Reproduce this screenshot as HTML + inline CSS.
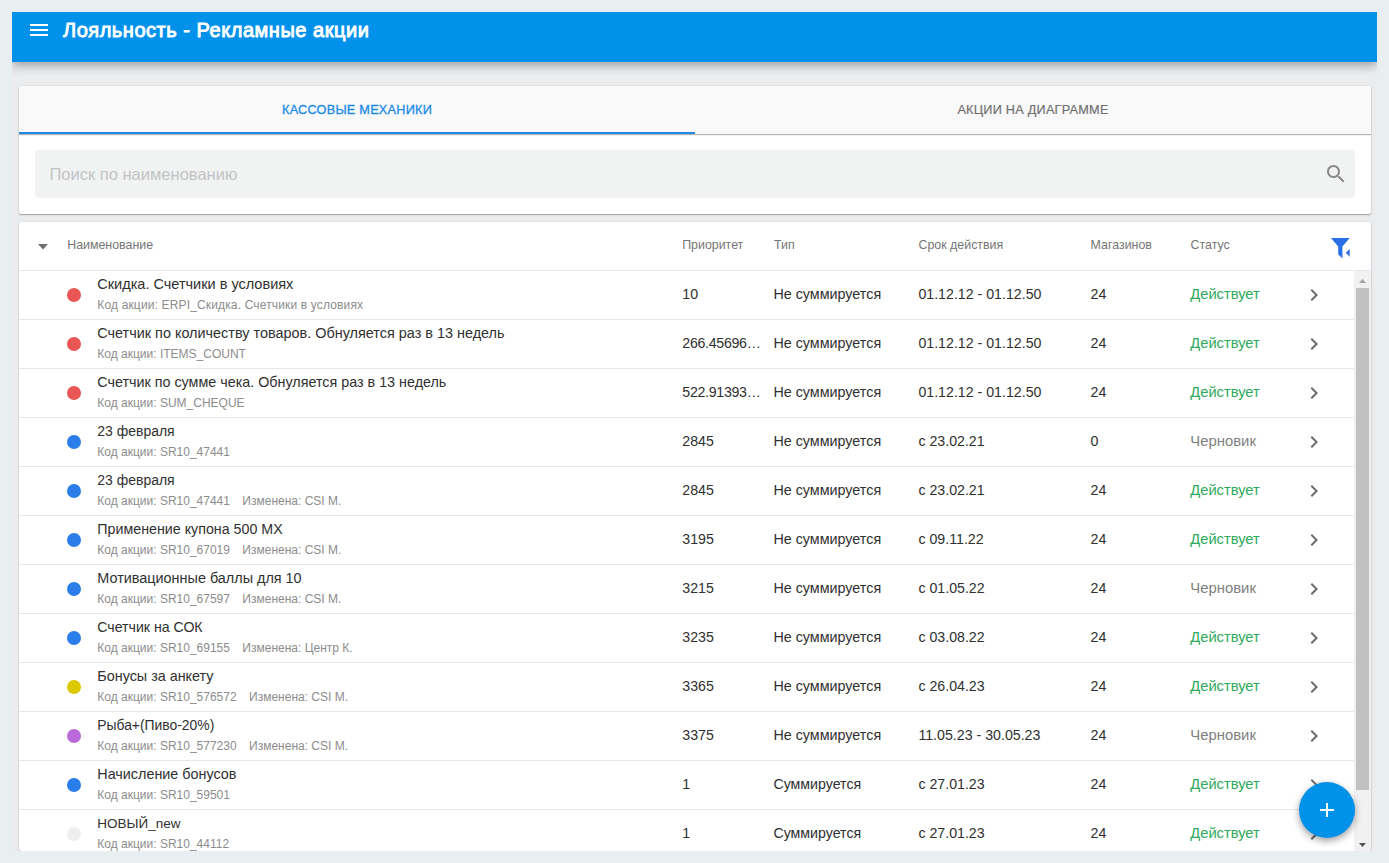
<!DOCTYPE html>
<html><head><meta charset="utf-8">
<style>
*{box-sizing:border-box;margin:0;padding:0}
html,body{width:1389px;height:863px;overflow:hidden}
body{background:#e9eef1;font-family:"Liberation Sans",sans-serif;position:relative}
.t{position:absolute;white-space:nowrap}
#cont{position:absolute;left:12px;top:12px;width:1365px;height:851px;background:#ebecee;overflow:hidden}
#hdr{position:absolute;left:0;top:0;width:1365px;height:50px;background:#0091ea;box-shadow:0 3px 10px rgba(0,0,0,.35)}
.card{position:absolute;background:#fff;border-radius:2px;box-shadow:0 1px 1.5px rgba(0,0,0,.33),0 0 1.5px rgba(0,0,0,.12)}
#top{left:19px;top:86px;width:1352px;height:128px}
#tabs{position:absolute;left:0;top:0;width:1352px;height:48px;background:#f9f9f9;border-radius:2px 2px 0 0;box-shadow:0 1px 0 #b4b4b4,0 2px 1px rgba(0,0,0,.06)}
#ind{position:absolute;left:0;top:46px;width:676px;height:2px;background:#1e88e5}
#search{position:absolute;left:16px;top:64px;width:1320px;height:48px;background:#f1f2f2;border-radius:4px}
#tbl{left:19px;top:222px;width:1352px;height:629px;overflow:hidden}
.sep{position:absolute;left:0;height:1px;background:#e6e6ee}
.dot{position:absolute;width:14px;height:14px;border-radius:50%}
#sb{position:absolute;left:1335px;top:49px;width:17px;height:580px;background:#f1f1f1}
#thumb{position:absolute;left:2px;top:17px;width:13px;height:502px;background:#c1c1c1}
#fab{position:absolute;left:1299px;top:782px;width:56px;height:56px;border-radius:50%;background:#0091ea;box-shadow:0 3px 6px rgba(0,0,0,.25),0 3px 10px rgba(0,0,0,.15)}
</style></head><body>
<div id="cont">
<div id="hdr">
  <svg style="position:absolute;left:18px;top:12px" width="18" height="12"><rect x="0" y="0" width="18" height="2" fill="#fff"/><rect x="0" y="5" width="18" height="2" fill="#fff"/><rect x="0" y="10" width="18" height="2" fill="#fff"/></svg>

<div class="t" style="left:51px;top:8.00px;font-size:20px;line-height:20px;color:#fff;letter-spacing:0.53px;-webkit-text-stroke:0.9px #fff">Лояльность - Рекламные акции</div>
</div></div>
<div class="card" id="top"><div id="tabs">
<div class="t" style="left:0;width:676px;text-align:center;top:18.00px;font-size:12.7px;line-height:12.7px;color:#1a8ae8;letter-spacing:0.24px;-webkit-text-stroke:0.3px #1a8ae8">КАССОВЫЕ МЕХАНИКИ</div>
<div class="t" style="left:676px;width:676px;text-align:center;top:18.00px;font-size:12.7px;line-height:12.7px;color:#707070;letter-spacing:0.24px;-webkit-text-stroke:0.2px #707070">АКЦИИ НА ДИАГРАММЕ</div>
<div id="ind"></div></div>
<div id="search"><div class="t" style="left:14.5px;top:16.00px;font-size:16.5px;line-height:16.5px;color:#c2c4c6">Поиск по наименованию</div>
<svg style="position:absolute;left:1289px;top:12px" width="24" height="24" viewBox="0 0 24 24"><path fill="#8a8a8a" d="M15.5 14h-.79l-.28-.27C15.41 12.59 16 11.11 16 9.5 16 5.91 13.09 3 9.5 3S3 5.91 3 9.5 5.91 16 9.5 16c1.61 0 3.09-.59 4.23-1.57l.27.28v.79l5 4.99L20.49 19l-4.99-5zm-6 0C7.01 14 5 11.99 5 9.5S7.01 5 9.5 5 14 7.01 14 9.5 11.99 14 9.5 14z"/></svg>
</div></div>
<div class="card" id="tbl">
<svg style="position:absolute;left:19px;top:21.5px" width="10" height="6"><path d="M0 0L10 0L5 5.5Z" fill="#6e6e6e"/></svg>
<div class="t" style="left:48.2px;top:17.00px;font-size:12.4px;line-height:12.4px;color:#757575">Наименование</div>
<div class="t" style="left:663.2px;top:17.00px;font-size:12.4px;line-height:12.4px;color:#757575">Приоритет</div>
<div class="t" style="left:755.0px;top:17.00px;font-size:12.4px;line-height:12.4px;color:#757575">Тип</div>
<div class="t" style="left:899.5px;top:17.00px;font-size:12.4px;line-height:12.4px;color:#757575">Срок действия</div>
<div class="t" style="left:1071.6px;top:17.00px;font-size:12.4px;line-height:12.4px;color:#757575">Магазинов</div>
<div class="t" style="left:1171.6px;top:17.00px;font-size:12.4px;line-height:12.4px;color:#757575">Статус</div>
<svg style="position:absolute;left:1312px;top:16px" width="20" height="22" viewBox="0 0 20 22"><path fill="#2a6ee8" d="M0 0H18.7L11.4 8.6V20.5L7.2 16.2V8.6Z"/><path fill="#2a6ee8" d="M18.7 11V18.7L14.8 14.8Z"/></svg>
<div class="sep" style="top:48px;width:1352px"></div>
<div class="dot" style="left:48px;top:66px;background:#e85656"></div>
<div class="t" style="left:78.3px;top:55.00px;font-size:14.51px;line-height:14.51px;color:#303030">Скидка. Счетчики в условиях</div>
<div class="t" style="left:78.3px;top:77.00px;font-size:12.0px;line-height:12.0px;color:#8c8c8c;letter-spacing:0.15px">Код акции: ERPI_Скидка. Счетчики в условиях</div>
<div class="t" style="left:663.3px;top:65.00px;font-size:14.2px;line-height:14.2px;color:#303030">10</div>
<div class="t" style="left:754.4px;top:65.00px;font-size:14.33px;line-height:14.33px;color:#303030">Не суммируется</div>
<div class="t" style="left:899.4px;top:65.00px;font-size:14.2px;line-height:14.2px;color:#303030">01.12.12 - 01.12.50</div>
<div class="t" style="left:1071.6px;top:65.00px;font-size:14.2px;line-height:14.2px;color:#303030">24</div>
<div class="t" style="left:1171.3px;top:65.00px;font-size:14.7px;line-height:14.7px;color:#2eaa5c">Действует</div>
<svg style="position:absolute;left:1283px;top:61px" width="24" height="24" viewBox="0 0 24 24"><path fill="#6b6b6b" d="M10 6L8.59 7.41 13.17 12l-4.58 4.59L10 18l6-6z"/></svg>
<div class="sep" style="top:97px;width:1335px"></div>
<div class="dot" style="left:48px;top:115px;background:#e85656"></div>
<div class="t" style="left:78.3px;top:104.00px;font-size:14.43px;line-height:14.43px;color:#303030">Счетчик по количеству товаров. Обнуляется раз в 13 недель</div>
<div class="t" style="left:78.3px;top:126.00px;font-size:12.0px;line-height:12.0px;color:#8c8c8c">Код акции: ITEMS_COUNT</div>
<div class="t" style="left:663.3px;top:114.00px;font-size:14.2px;line-height:14.2px;color:#303030;letter-spacing:-0.3px">266.45696…</div>
<div class="t" style="left:754.4px;top:114.00px;font-size:14.33px;line-height:14.33px;color:#303030">Не суммируется</div>
<div class="t" style="left:899.4px;top:114.00px;font-size:14.2px;line-height:14.2px;color:#303030">01.12.12 - 01.12.50</div>
<div class="t" style="left:1071.6px;top:114.00px;font-size:14.2px;line-height:14.2px;color:#303030">24</div>
<div class="t" style="left:1171.3px;top:114.00px;font-size:14.7px;line-height:14.7px;color:#2eaa5c">Действует</div>
<svg style="position:absolute;left:1283px;top:110px" width="24" height="24" viewBox="0 0 24 24"><path fill="#6b6b6b" d="M10 6L8.59 7.41 13.17 12l-4.58 4.59L10 18l6-6z"/></svg>
<div class="sep" style="top:146px;width:1335px"></div>
<div class="dot" style="left:48px;top:164px;background:#e85656"></div>
<div class="t" style="left:78.3px;top:153.00px;font-size:14.33px;line-height:14.33px;color:#303030">Счетчик по сумме чека. Обнуляется раз в 13 недель</div>
<div class="t" style="left:78.3px;top:175.00px;font-size:12.0px;line-height:12.0px;color:#8c8c8c">Код акции: SUM_CHEQUE</div>
<div class="t" style="left:663.3px;top:163.00px;font-size:14.2px;line-height:14.2px;color:#303030;letter-spacing:-0.3px">522.91393…</div>
<div class="t" style="left:754.4px;top:163.00px;font-size:14.33px;line-height:14.33px;color:#303030">Не суммируется</div>
<div class="t" style="left:899.4px;top:163.00px;font-size:14.2px;line-height:14.2px;color:#303030">01.12.12 - 01.12.50</div>
<div class="t" style="left:1071.6px;top:163.00px;font-size:14.2px;line-height:14.2px;color:#303030">24</div>
<div class="t" style="left:1171.3px;top:163.00px;font-size:14.7px;line-height:14.7px;color:#2eaa5c">Действует</div>
<svg style="position:absolute;left:1283px;top:159px" width="24" height="24" viewBox="0 0 24 24"><path fill="#6b6b6b" d="M10 6L8.59 7.41 13.17 12l-4.58 4.59L10 18l6-6z"/></svg>
<div class="sep" style="top:195px;width:1335px"></div>
<div class="dot" style="left:48px;top:213px;background:#2b7de9"></div>
<div class="t" style="left:78.3px;top:202.00px;font-size:13.98px;line-height:13.98px;color:#303030">23 февраля</div>
<div class="t" style="left:78.3px;top:224.00px;font-size:12.0px;line-height:12.0px;color:#8c8c8c">Код акции: SR10_47441</div>
<div class="t" style="left:663.3px;top:212.00px;font-size:14.2px;line-height:14.2px;color:#303030">2845</div>
<div class="t" style="left:754.4px;top:212.00px;font-size:14.33px;line-height:14.33px;color:#303030">Не суммируется</div>
<div class="t" style="left:899.4px;top:212.00px;font-size:14.2px;line-height:14.2px;color:#303030">с 23.02.21</div>
<div class="t" style="left:1071.6px;top:212.00px;font-size:14.2px;line-height:14.2px;color:#303030">0</div>
<div class="t" style="left:1171.3px;top:212.00px;font-size:14.86px;line-height:14.86px;color:#808080">Черновик</div>
<svg style="position:absolute;left:1283px;top:208px" width="24" height="24" viewBox="0 0 24 24"><path fill="#6b6b6b" d="M10 6L8.59 7.41 13.17 12l-4.58 4.59L10 18l6-6z"/></svg>
<div class="sep" style="top:244px;width:1335px"></div>
<div class="dot" style="left:48px;top:262px;background:#2b7de9"></div>
<div class="t" style="left:78.3px;top:251.00px;font-size:13.98px;line-height:13.98px;color:#303030">23 февраля</div>
<div class="t" style="left:78.3px;top:273.00px;font-size:12.0px;line-height:12.0px;color:#8c8c8c">Код акции: SR10_47441<span style="margin-left:12.4px">Изменена: CSI M.</span></div>
<div class="t" style="left:663.3px;top:261.00px;font-size:14.2px;line-height:14.2px;color:#303030">2845</div>
<div class="t" style="left:754.4px;top:261.00px;font-size:14.33px;line-height:14.33px;color:#303030">Не суммируется</div>
<div class="t" style="left:899.4px;top:261.00px;font-size:14.2px;line-height:14.2px;color:#303030">с 23.02.21</div>
<div class="t" style="left:1071.6px;top:261.00px;font-size:14.2px;line-height:14.2px;color:#303030">24</div>
<div class="t" style="left:1171.3px;top:261.00px;font-size:14.7px;line-height:14.7px;color:#2eaa5c">Действует</div>
<svg style="position:absolute;left:1283px;top:257px" width="24" height="24" viewBox="0 0 24 24"><path fill="#6b6b6b" d="M10 6L8.59 7.41 13.17 12l-4.58 4.59L10 18l6-6z"/></svg>
<div class="sep" style="top:293px;width:1335px"></div>
<div class="dot" style="left:48px;top:311px;background:#2b7de9"></div>
<div class="t" style="left:78.3px;top:300.00px;font-size:14.25px;line-height:14.25px;color:#303030">Применение купона 500 MX</div>
<div class="t" style="left:78.3px;top:322.00px;font-size:12.0px;line-height:12.0px;color:#8c8c8c">Код акции: SR10_67019<span style="margin-left:12.4px">Изменена: CSI M.</span></div>
<div class="t" style="left:663.3px;top:310.00px;font-size:14.2px;line-height:14.2px;color:#303030">3195</div>
<div class="t" style="left:754.4px;top:310.00px;font-size:14.33px;line-height:14.33px;color:#303030">Не суммируется</div>
<div class="t" style="left:899.4px;top:310.00px;font-size:14.2px;line-height:14.2px;color:#303030">с 09.11.22</div>
<div class="t" style="left:1071.6px;top:310.00px;font-size:14.2px;line-height:14.2px;color:#303030">24</div>
<div class="t" style="left:1171.3px;top:310.00px;font-size:14.7px;line-height:14.7px;color:#2eaa5c">Действует</div>
<svg style="position:absolute;left:1283px;top:306px" width="24" height="24" viewBox="0 0 24 24"><path fill="#6b6b6b" d="M10 6L8.59 7.41 13.17 12l-4.58 4.59L10 18l6-6z"/></svg>
<div class="sep" style="top:342px;width:1335px"></div>
<div class="dot" style="left:48px;top:360px;background:#2b7de9"></div>
<div class="t" style="left:78.3px;top:349.00px;font-size:14.41px;line-height:14.41px;color:#303030">Мотивационные баллы для 10</div>
<div class="t" style="left:78.3px;top:371.00px;font-size:12.0px;line-height:12.0px;color:#8c8c8c">Код акции: SR10_67597<span style="margin-left:12.4px">Изменена: CSI M.</span></div>
<div class="t" style="left:663.3px;top:359.00px;font-size:14.2px;line-height:14.2px;color:#303030">3215</div>
<div class="t" style="left:754.4px;top:359.00px;font-size:14.33px;line-height:14.33px;color:#303030">Не суммируется</div>
<div class="t" style="left:899.4px;top:359.00px;font-size:14.2px;line-height:14.2px;color:#303030">с 01.05.22</div>
<div class="t" style="left:1071.6px;top:359.00px;font-size:14.2px;line-height:14.2px;color:#303030">24</div>
<div class="t" style="left:1171.3px;top:359.00px;font-size:14.86px;line-height:14.86px;color:#808080">Черновик</div>
<svg style="position:absolute;left:1283px;top:355px" width="24" height="24" viewBox="0 0 24 24"><path fill="#6b6b6b" d="M10 6L8.59 7.41 13.17 12l-4.58 4.59L10 18l6-6z"/></svg>
<div class="sep" style="top:391px;width:1335px"></div>
<div class="dot" style="left:48px;top:409px;background:#2b7de9"></div>
<div class="t" style="left:78.3px;top:398.00px;font-size:14.14px;line-height:14.14px;color:#303030">Счетчик на СОК</div>
<div class="t" style="left:78.3px;top:420.00px;font-size:12.0px;line-height:12.0px;color:#8c8c8c">Код акции: SR10_69155<span style="margin-left:12.4px">Изменена: Центр К.</span></div>
<div class="t" style="left:663.3px;top:408.00px;font-size:14.2px;line-height:14.2px;color:#303030">3235</div>
<div class="t" style="left:754.4px;top:408.00px;font-size:14.33px;line-height:14.33px;color:#303030">Не суммируется</div>
<div class="t" style="left:899.4px;top:408.00px;font-size:14.2px;line-height:14.2px;color:#303030">с 03.08.22</div>
<div class="t" style="left:1071.6px;top:408.00px;font-size:14.2px;line-height:14.2px;color:#303030">24</div>
<div class="t" style="left:1171.3px;top:408.00px;font-size:14.7px;line-height:14.7px;color:#2eaa5c">Действует</div>
<svg style="position:absolute;left:1283px;top:404px" width="24" height="24" viewBox="0 0 24 24"><path fill="#6b6b6b" d="M10 6L8.59 7.41 13.17 12l-4.58 4.59L10 18l6-6z"/></svg>
<div class="sep" style="top:440px;width:1335px"></div>
<div class="dot" style="left:48px;top:458px;background:#dcc800"></div>
<div class="t" style="left:78.3px;top:447.00px;font-size:14.37px;line-height:14.37px;color:#303030">Бонусы за анкету</div>
<div class="t" style="left:78.3px;top:469.00px;font-size:12.0px;line-height:12.0px;color:#8c8c8c">Код акции: SR10_576572<span style="margin-left:12.4px">Изменена: CSI M.</span></div>
<div class="t" style="left:663.3px;top:457.00px;font-size:14.2px;line-height:14.2px;color:#303030">3365</div>
<div class="t" style="left:754.4px;top:457.00px;font-size:14.33px;line-height:14.33px;color:#303030">Не суммируется</div>
<div class="t" style="left:899.4px;top:457.00px;font-size:14.2px;line-height:14.2px;color:#303030">с 26.04.23</div>
<div class="t" style="left:1071.6px;top:457.00px;font-size:14.2px;line-height:14.2px;color:#303030">24</div>
<div class="t" style="left:1171.3px;top:457.00px;font-size:14.7px;line-height:14.7px;color:#2eaa5c">Действует</div>
<svg style="position:absolute;left:1283px;top:453px" width="24" height="24" viewBox="0 0 24 24"><path fill="#6b6b6b" d="M10 6L8.59 7.41 13.17 12l-4.58 4.59L10 18l6-6z"/></svg>
<div class="sep" style="top:489px;width:1335px"></div>
<div class="dot" style="left:48px;top:507px;background:#bb6ad9"></div>
<div class="t" style="left:78.3px;top:497.00px;font-size:13.88px;line-height:13.88px;color:#303030">Рыба+(Пиво-20%)</div>
<div class="t" style="left:78.3px;top:518.00px;font-size:12.0px;line-height:12.0px;color:#8c8c8c">Код акции: SR10_577230<span style="margin-left:12.4px">Изменена: CSI M.</span></div>
<div class="t" style="left:663.3px;top:506.00px;font-size:14.2px;line-height:14.2px;color:#303030">3375</div>
<div class="t" style="left:754.4px;top:506.00px;font-size:14.33px;line-height:14.33px;color:#303030">Не суммируется</div>
<div class="t" style="left:899.4px;top:506.00px;font-size:14.2px;line-height:14.2px;color:#303030">11.05.23 - 30.05.23</div>
<div class="t" style="left:1071.6px;top:506.00px;font-size:14.2px;line-height:14.2px;color:#303030">24</div>
<div class="t" style="left:1171.3px;top:506.00px;font-size:14.86px;line-height:14.86px;color:#808080">Черновик</div>
<svg style="position:absolute;left:1283px;top:502px" width="24" height="24" viewBox="0 0 24 24"><path fill="#6b6b6b" d="M10 6L8.59 7.41 13.17 12l-4.58 4.59L10 18l6-6z"/></svg>
<div class="sep" style="top:538px;width:1335px"></div>
<div class="dot" style="left:48px;top:556px;background:#2b7de9"></div>
<div class="t" style="left:78.3px;top:545.00px;font-size:14.37px;line-height:14.37px;color:#303030">Начисление бонусов</div>
<div class="t" style="left:78.3px;top:567.00px;font-size:12.0px;line-height:12.0px;color:#8c8c8c">Код акции: SR10_59501</div>
<div class="t" style="left:663.3px;top:555.00px;font-size:14.2px;line-height:14.2px;color:#303030">1</div>
<div class="t" style="left:754.4px;top:555.00px;font-size:14.2px;line-height:14.2px;color:#303030">Суммируется</div>
<div class="t" style="left:899.4px;top:555.00px;font-size:14.2px;line-height:14.2px;color:#303030">с 27.01.23</div>
<div class="t" style="left:1071.6px;top:555.00px;font-size:14.2px;line-height:14.2px;color:#303030">24</div>
<div class="t" style="left:1171.3px;top:555.00px;font-size:14.7px;line-height:14.7px;color:#2eaa5c">Действует</div>
<svg style="position:absolute;left:1283px;top:551px" width="24" height="24" viewBox="0 0 24 24"><path fill="#6b6b6b" d="M10 6L8.59 7.41 13.17 12l-4.58 4.59L10 18l6-6z"/></svg>
<div class="sep" style="top:587px;width:1335px"></div>
<div class="dot" style="left:48px;top:605px;background:#efefef"></div>
<div class="t" style="left:78.3px;top:595.00px;font-size:13.5px;line-height:13.5px;color:#303030">НОВЫЙ_new</div>
<div class="t" style="left:78.3px;top:616.00px;font-size:12.0px;line-height:12.0px;color:#8c8c8c">Код акции: SR10_44112</div>
<div class="t" style="left:663.3px;top:604.00px;font-size:14.2px;line-height:14.2px;color:#303030">1</div>
<div class="t" style="left:754.4px;top:604.00px;font-size:14.2px;line-height:14.2px;color:#303030">Суммируется</div>
<div class="t" style="left:899.4px;top:604.00px;font-size:14.2px;line-height:14.2px;color:#303030">с 27.01.23</div>
<div class="t" style="left:1071.6px;top:604.00px;font-size:14.2px;line-height:14.2px;color:#303030">24</div>
<div class="t" style="left:1171.3px;top:604.00px;font-size:14.7px;line-height:14.7px;color:#2eaa5c">Действует</div>
<svg style="position:absolute;left:1283px;top:600px" width="24" height="24" viewBox="0 0 24 24"><path fill="#6b6b6b" d="M10 6L8.59 7.41 13.17 12l-4.58 4.59L10 18l6-6z"/></svg>
<div class="sep" style="top:636px;width:1335px"></div>
<div id="sb"><div id="thumb"></div>
<svg style="position:absolute;left:5px;top:8px" width="7" height="4"><path d="M0 4L3.5 0L7 4Z" fill="#a3a3a3"/></svg>
<svg style="position:absolute;left:5px;top:572px" width="7" height="4"><path d="M0 0L7 0L3.5 4Z" fill="#505050"/></svg>
</div></div>
<div id="fab"><svg style="position:absolute;left:16px;top:16px" width="24" height="24" viewBox="0 0 24 24"><path fill="#fff" d="M19 13h-6v6h-2v-6H5v-2h6V5h2v6h6v2z"/></svg></div>
<div style="position:absolute;left:0;top:851px;width:1389px;height:12px;background:#e9eef1"></div>
</body></html>
